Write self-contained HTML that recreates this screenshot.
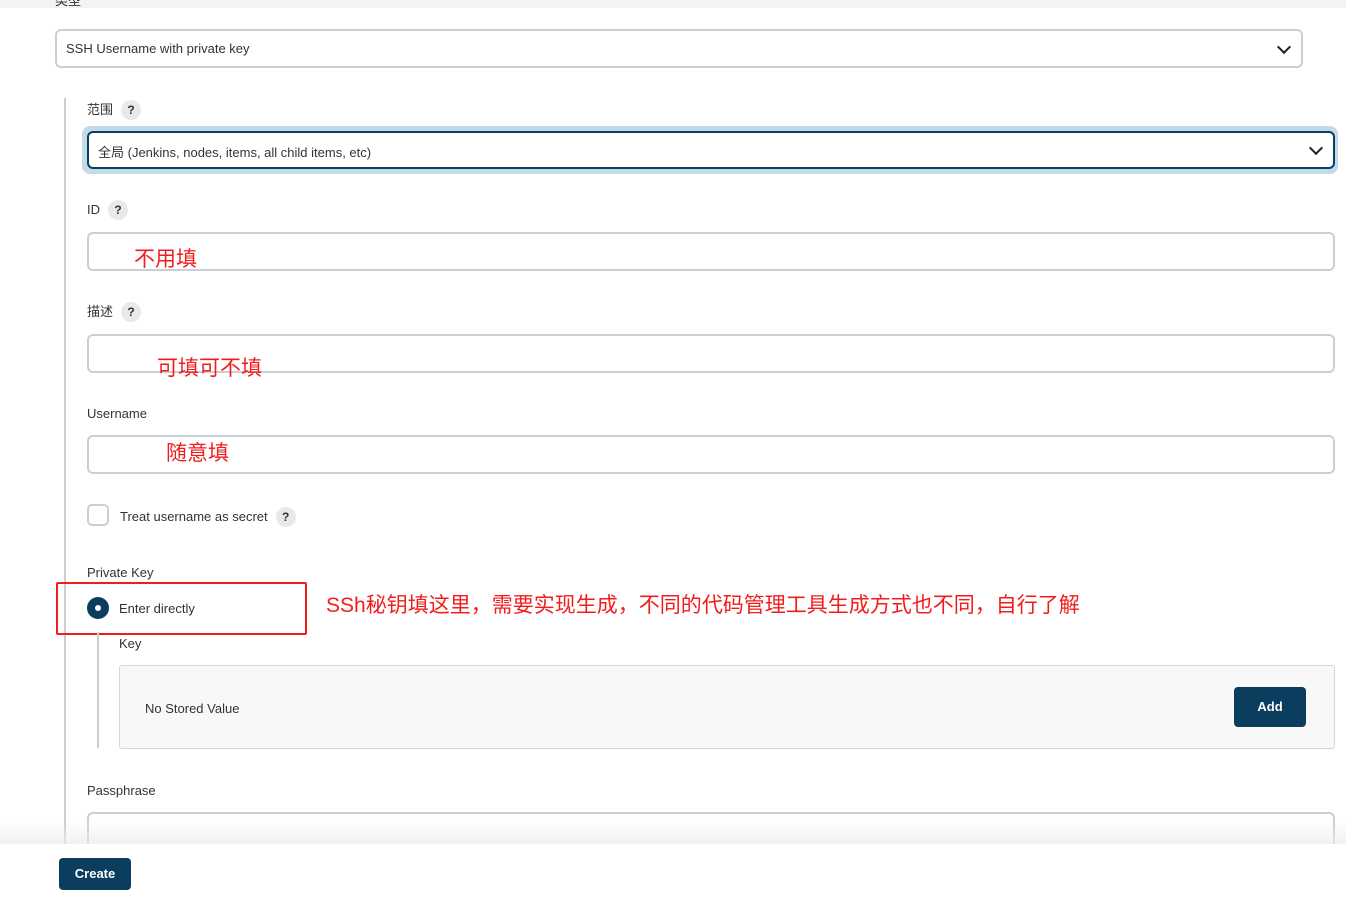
<!DOCTYPE html>
<html><head><meta charset="utf-8"><style>
body{margin:0;width:1346px;height:897px;background:#fff;font-family:"Liberation Sans","Noto Sans CJK SC",sans-serif;color:#333;position:relative;overflow:hidden;font-size:13px}
.a{position:absolute}
.inp{position:absolute;border:2px solid #c8d0d6;border-radius:6px;background:#fff;box-sizing:border-box}
.lbl{position:absolute;font-size:13px;color:#333}
.q{display:inline-block;width:20px;height:20px;border-radius:50%;background:#e9e9e9;text-align:center;line-height:20px;font-size:12px;font-weight:bold;margin-left:8px;color:#333}
.red{position:absolute;color:#f21c1c;font-size:21px}
.chev{position:absolute;width:8px;height:8px;border-right:2px solid #222;border-bottom:2px solid #222;transform:rotate(45deg)}
.btn{position:absolute;background:#0b3d5e;color:#fff;font-weight:bold;font-size:13px;border-radius:4px;text-align:center}
</style></head><body>
<div class="a" style="left:0;top:0;width:1346px;height:8px;background:#f3f3f3"></div>
<div class="a" style="left:55px;top:-10px;font-size:13px">类型</div>
<div class="inp" style="left:55px;top:29px;width:1248px;height:39px"><span class="a" style="left:9px;top:10px">SSH Username with private key</span></div>
<div class="chev" style="left:1279px;top:42px"></div>
<div class="a" style="left:64px;top:98px;width:2px;height:760px;background:#c8d0d6"></div>
<div class="lbl" style="left:87px;top:99px">范围<span class="q">?</span></div>
<div class="a" style="left:82px;top:126px;width:1256px;height:48px;border-radius:8px;background:#c3dae8"></div>
<div class="inp" style="left:87px;top:131px;width:1248px;height:38px;border:2px solid #0b3d5e"><span class="a" style="left:9px;top:9px">全局 (Jenkins, nodes, items, all child items, etc)</span></div>
<div class="chev" style="left:1311px;top:143px"></div>
<div class="lbl" style="left:87px;top:200px">ID<span class="q">?</span></div>
<div class="inp" style="left:87px;top:232px;width:1248px;height:39px"></div>
<div class="red" style="left:134px;top:243px">不用填</div>
<div class="lbl" style="left:87px;top:301px">描述<span class="q">?</span></div>
<div class="inp" style="left:87px;top:334px;width:1248px;height:39px"></div>
<div class="red" style="left:157px;top:352px">可填可不填</div>
<div class="lbl" style="left:87px;top:406px">Username</div>
<div class="inp" style="left:87px;top:435px;width:1248px;height:39px"></div>
<div class="red" style="left:166px;top:437px">随意填</div>
<div class="inp" style="left:87px;top:504px;width:22px;height:22px;border-radius:5px"></div>
<div class="lbl" style="left:120px;top:507px">Treat username as secret<span class="q">?</span></div>
<div class="lbl" style="left:87px;top:565px">Private Key</div>
<div class="a" style="left:87px;top:597px;width:22px;height:22px;border-radius:50%;background:#0b3d5e"></div>
<div class="a" style="left:95px;top:605px;width:6px;height:6px;border-radius:50%;background:#fff"></div>
<div class="lbl" style="left:119px;top:601px">Enter directly</div>
<div class="a" style="left:56px;top:582px;width:247px;height:49px;border:2px solid #f21c1c;border-radius:2px"></div>
<div class="red" style="left:326px;top:589px">SSh秘钥填这里，需要实现生成，不同的代码管理工具生成方式也不同，自行了解</div>
<div class="a" style="left:97px;top:632px;width:2px;height:116px;background:#c8d0d6"></div>
<div class="lbl" style="left:119px;top:636px">Key</div>
<div class="a" style="left:119px;top:665px;width:1216px;height:84px;border:1px solid #d3d8dc;border-radius:3px;background:#f8f8f8;box-sizing:border-box"></div>
<div class="lbl" style="left:145px;top:701px">No Stored Value</div>
<div class="btn" style="left:1234px;top:687px;width:72px;height:40px;line-height:40px">Add</div>
<div class="lbl" style="left:87px;top:783px">Passphrase</div>
<div class="inp" style="left:87px;top:812px;width:1248px;height:50px"></div>
<div class="a" style="left:0;top:820px;width:1346px;height:24px;background:linear-gradient(rgba(255,255,255,0),rgba(235,235,235,0.7))"></div>
<div class="a" style="left:0;top:844px;width:1346px;height:53px;background:#fff"></div>
<div class="btn" style="left:59px;top:858px;width:72px;height:32px;line-height:32px">Create</div>
</body></html>
